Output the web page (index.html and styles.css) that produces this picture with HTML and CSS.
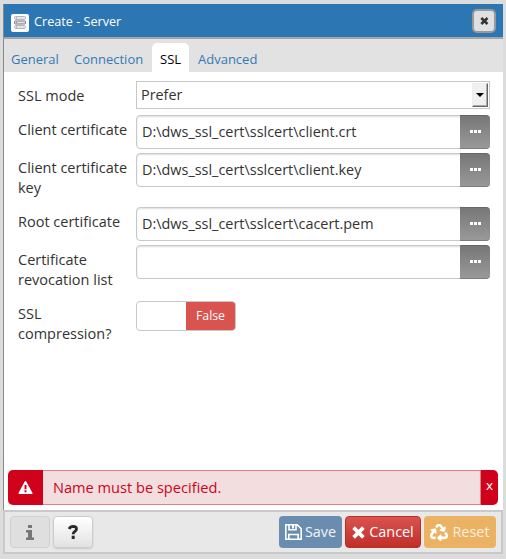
FILE: index.html
```html
<!DOCTYPE html>
<html lang="en">
<head>
<meta charset="utf-8">
<title>Create - Server</title>
<link rel="stylesheet" href="styles.css">
</head>
<body>
<div class="dialog">
  <header class="titlebar">
    <span class="server-icon"><svg width="14" height="14" viewBox="0 0 14 14"><g fill="#e4e4e8" stroke="#b5b5bb"><rect x="1.5" y=".5" width="11" height="3" rx="1"/><rect x="1.5" y="9.5" width="11" height="3" rx="1"/><rect x="1.5" y="5" width="11" height="3" rx="1" stroke="#777785"/></g><path d="M3 2h1M3 6.5h1M3 11h1" stroke="#8a8a95"/></svg></span>
    <h1>Create - Server</h1>
    <button class="close" aria-label="Close"><svg width="9" height="8" viewBox="0 0 9 8"><path d="M1.3 1l6.2 6M7.5 1L1.3 7" stroke="#333" stroke-width="2.5"/></svg></button>
  </header>
  <nav class="tabs"><a>General</a><a class="connection">Connection</a><a class="active">SSL</a><a class="advanced">Advanced</a></nav>
  <main class="body">
    <div class="row mode"><label>SSL mode</label><div class="select"><span>Prefer</span><i class="arrow"></i></div></div>
    <div class="row"><label>Client certificate</label><div class="file"><span>D:\dws_ssl_cert\sslcert\client.crt</span><button class="browse"><i></i><i></i><i></i></button></div></div>
    <div class="row tall"><label>Client certificate key</label><div class="file"><span>D:\dws_ssl_cert\sslcert\client.key</span><button class="browse"><i></i><i></i><i></i></button></div></div>
    <div class="row"><label>Root certificate</label><div class="file"><span>D:\dws_ssl_cert\sslcert\cacert.pem</span><button class="browse"><i></i><i></i><i></i></button></div></div>
    <div class="row tall"><label>Certificate revocation list</label><div class="file"><span></span><button class="browse"><i></i><i></i><i></i></button></div></div>
    <div class="row compression"><label>SSL compression?</label><div class="toggle"><span>False</span></div></div>
    <div class="alert">
      <span class="alert-icon"><svg width="15" height="13" viewBox="0 0 15 13"><path fill="#fff" d="M7.5 0Q8 0 8.4.7L14.5 12Q14.7 13 14 13H1Q.3 13 .5 12L6.6.7Q7 0 7.5 0z"/><path d="M7.5 4v4.2M7.5 9.3v1.9" stroke="#d0021b" stroke-width="2"/></svg></span>
      <p>Name must be specified.</p>
      <button class="dismiss">x</button>
    </div>
  </main>
  <footer class="footer">
    <button class="btn info" aria-label="Info"><svg width="8" height="15" viewBox="0 0 8 15"><path fill="#777" d="M2 0h4v3H2zM0 5h6v7.5h2V15H0v-2.5h2v-5H0z"/></svg></button>
    <button class="btn help" aria-label="Help"><svg width="10" height="14" viewBox="0 0 10 14"><path d="M1.1 4Q2.2 1.4 5 1.4 8.5 1.5 8.5 4C8.5 6.5 5.2 6.3 5.2 9.2" fill="none" stroke="#2b2b2b" stroke-width="2.8"/><path fill="#2b2b2b" d="M3.7 10.7h3V14h-3z"/></svg></button>
    <span class="spacer"></span>
    <button class="btn save"><svg width="17" height="16" viewBox="0 0 17 16"><path d="M.8.8h11.4l4 4v10.4H.8zM3.8 15v-4.5h9.4V15M4 1v4.8h7V1" fill="none" stroke="#fff" stroke-width="1.6"/><path fill="#fff" d="M7 1h2v3.5H7z"/></svg>Save</button>
    <button class="btn cancel"><svg width="13" height="13" viewBox="0 0 13 13"><path d="M1.6 1.6l9.8 9.8M11.4 1.6l-9.8 9.8" stroke="#fff" stroke-width="3.7"/></svg>Cancel</button>
    <button class="btn reset"><svg width="18" height="17" viewBox="0 0 512 512" preserveAspectRatio="none"><path fill="#fff" stroke="#fff" stroke-width="14" d="M184.561 261.903c3.232 13.997-12.123 24.635-24.068 17.168l-40.736-25.455-50.867 81.402C55.606 356.273 70.96 384 96.012 384H148c6.627 0 12 5.373 12 12v40c0 6.627-5.373 12-12 12H96.115c-75.334 0-121.302-83.048-81.408-146.88l50.822-81.388-40.725-25.448c-12.081-7.547-8.966-25.961 4.879-29.158l110.237-25.45c8.611-1.988 17.201 3.381 19.189 11.99l25.452 110.237zm98.561-182.915l41.289 66.076-40.74 25.457c-12.051 7.528-9 25.953 4.879 29.158l110.237 25.45c8.672 1.999 17.215-3.438 19.189-11.99l25.45-110.237c3.197-13.844-11.99-24.719-24.068-17.168l-40.687 25.424-41.263-66.082c-37.521-60.033-125.209-60.171-162.816 0l-17.963 28.766c-3.51 5.62-1.8 13.021 3.82 16.533l33.919 21.195c5.62 3.512 13.024 1.803 16.536-3.817l17.961-28.743c12.712-20.341 41.973-19.676 54.257-.022zM497.288 301.12l-27.515-44.065c-3.511-5.623-10.916-7.334-16.538-3.821l-33.861 21.159c-5.62 3.512-7.33 10.915-3.818 16.536l27.564 44.112c13.257 21.211-2.057 48.96-27.136 48.96H320V336.02c0-14.213-17.242-21.383-27.313-11.313l-80 79.981c-6.249 6.248-6.249 16.379 0 22.627l80 79.989C302.689 517.308 320 510.3 320 495.989V448h95.88c75.274 0 121.335-82.997 81.408-146.88z"/></svg>Reset</button>
  </footer>
</div>
</body>
</html>
```

FILE: styles.css
```css
* { box-sizing: border-box; }
body { margin: 0; height: 559px; padding: 4px 3px 5px; background: #dcdcdc; font: 15px/20px "Open Sans", sans-serif; color: #333; overflow: hidden; }
button { font: inherit; padding: 0; border: 0; display: flex; align-items: center; justify-content: center; }
svg { display: block; flex: none; }
.dialog { width: 500px; height: 550px; display: flex; flex-direction: column; }
.titlebar { height: 35px; display: flex; align-items: center; padding: 0 7px 0 7px; background: #2c76b4; border-left: 1px solid #888; border-bottom: 2px solid #a5a5a5; }
.server-icon { width: 18px; height: 18px; border-radius: 2px; background: #fff; display: flex; align-items: center; justify-content: center; margin-top: 4px; }
h1 { margin: 0 auto 0 5px; font-size: 12.65px; line-height: 20px; font-weight: 400; color: #fff; }
.close { width: 24px; height: 24px; background: #e0e0e0; border: 2px solid #999; border-radius: 5px; margin-top: 1px; }
.tabs { height: 33px; display: flex; align-items: flex-end; background: #e2e2e2; border-left: 1px solid #888; font-size: 13px; color: #337ab7; }
.tabs a { height: 29px; line-height: 20px; padding: 6px 7px 0; width: 63px; white-space: nowrap; }
.tabs .connection { width: 85px; }
.tabs .active { width: 37px; padding: 6px 8px 0; background: #fff; color: #000; border-radius: 5px 5px 0 0; }
.tabs .advanced { width: 90px; padding-left: 9px; }
.body { height: 438px; background: #fff; border-left: 1px solid #888; padding: 9px 5px 5px 4px; display: flex; flex-direction: column; }
.row { display: flex; height: 38px; padding: 0 8px 0 10px; flex: none; }
.row.mode { height: 34px; }
.row.tall { height: 54px; }
.row:nth-child(5) { height: 56px; }
label { width: 118px; padding: 5px 4px 0 0; font-size: 14.5px; }
.select { width: 354px; height: 28px; border: 1px solid #c8c8c8; display: flex; justify-content: space-between; padding: 1px 1px 1px 4px; line-height: 24px; font-size: 14.4px; }
.arrow { width: 16px; height: 24px; background: #f0f0f0; border: 1px solid #eee; border-right-color: #666; border-bottom-color: #666; box-shadow: inset -1px -1px #aaa; display: flex; align-items: center; justify-content: center; }
.arrow::before { content: ""; border: 4px solid transparent; border-top-color: #000; border-bottom: 0; }
.file { width: 354px; height: 34px; display: flex; border: 1px solid #c8c8c8; border-radius: 4px; box-shadow: inset 0 1px 2px #0002; font-size: 14.43px; }
.file span { flex: 1; padding-left: 5px; line-height: 32px; }
.browse { width: 30px; height: 34px; margin: -1px -1px 0 0; gap: 1px; border-radius: 0 4px 4px 0; background: linear-gradient(#777, #999); border-top: 1px solid #666; border-bottom: 1px solid #7b7b7b; }
.browse i { width: 3px; height: 3px; background: #fff; margin-top: -1px; }
.compression { height: 60px; }
.row.compression label { padding-top: 3px; }
.toggle { width: 100px; height: 30px; border: 1px solid #c8c8c8; border-radius: 4px; display: flex; justify-content: flex-end; }
.toggle span { width: 49px; height: 28px; border-radius: 0 3px 3px 0; background: #d9534f; color: #fff; font-size: 12.3px; line-height: 28px; text-align: center; }
.alert { margin-top: auto; height: 35px; display: flex; background: #f2dede; border-radius: 5px; overflow: hidden; color: #d0021b; flex: none; }
.alert-icon { width: 35px; background: #d0021b; display: flex; align-items: center; justify-content: center; }
.alert p { flex: 1; margin: 0; padding-left: 10px; line-height: 32px; font-size: 14.6px; border: solid #df8085; border-width: 1px 1px 1px 0; }
.dismiss { width: 17px; background: #d0021b; color: #fff; font-size: 13.5px; padding-bottom: 5px; }
.footer { height: 44px; display: flex; align-items: center; gap: 3px; padding: 0 5px; background: #e8e8e8; border: 2px solid #c9c9c9; }
.spacer { flex: 1; }
.btn { height: 32px; border-radius: 4px; font-size: 14.4px; gap: 4px; color: #fff; }
.info, .help { width: 40px; border: 1px solid #ccc; background: linear-gradient(#fff, #e2e2e2); box-shadow: 0 1px 2px #0002; }
.info { background: #dfdfdf; border-color: #d0d0d0; box-shadow: none; }
.save { width: 63px; background: #6a8caf; color: #f1f4f7; gap: 3px; }
.cancel { width: 76px; background: linear-gradient(#d9534f, #c12e2a); border: 1px solid #b92c28; }
.reset { width: 72px; background: #ebb263; color: #fbf0df; }
```
